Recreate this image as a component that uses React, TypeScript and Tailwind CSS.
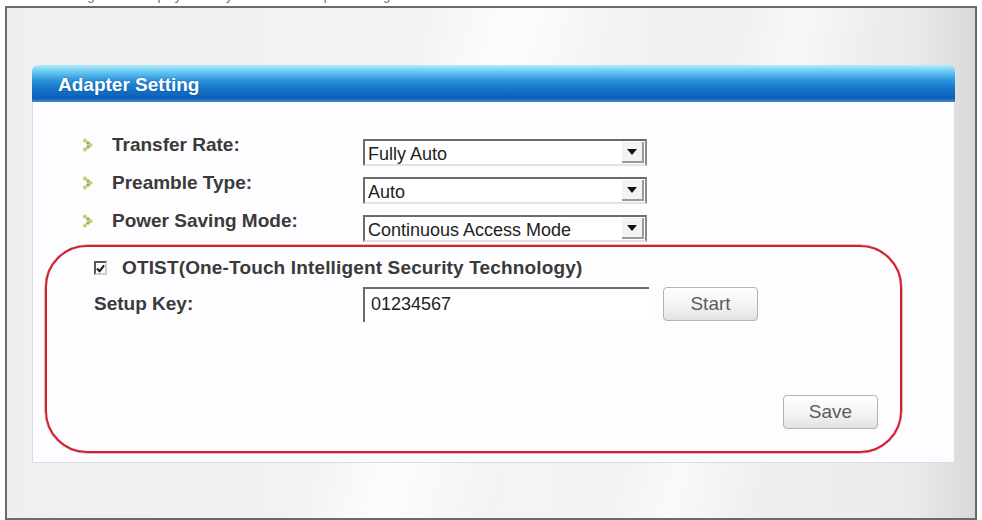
import React from "react";

// little dotted chevron used in front of each setting label
function Bullet() {
  return (
    <svg width="12" height="14" viewBox="0 0 12 14" className="shrink-0">
      <circle cx="3" cy="2.5" r="2" fill="#c9d257" />
      <circle cx="6" cy="5" r="1.8" fill="#a2a86c" />
      <circle cx="8.5" cy="7" r="2" fill="#c9d257" />
      <circle cx="6" cy="9" r="1.8" fill="#a2a86c" />
      <circle cx="3" cy="11.5" r="2" fill="#c9d257" />
    </svg>
  );
}

function Select({ value }: { value: string }) {
  return (
    <div className="flex h-[27px] w-[284px] items-stretch border-2 border-t-[#6b6b6b] border-l-[#6b6b6b] border-r-[#8a8a8a] border-b-[#e2e2e2] bg-white">
      <span className="flex flex-1 items-center pl-[3px] pt-[2px] text-[18px] leading-none text-[#222]">
        {value}
      </span>
      <span className="my-[1px] mr-[1px] flex w-[22px] items-center justify-center border-r-2 border-b-2 border-r-[#9a9a9a] border-b-[#9a9a9a] bg-[#f3f3f3]">
        <svg width="10" height="6" viewBox="0 0 10 6">
          <polygon points="0,0 10,0 5,6" fill="#111" />
        </svg>
      </span>
    </div>
  );
}

function Button({ label }: { label: string }) {
  return (
    <button className="flex h-[34px] w-[95px] items-center justify-center rounded-[4px] border border-[#b3b3b3] bg-[linear-gradient(180deg,#ffffff_0%,#f3f3f3_55%,#e2e2e2_100%)] text-[19px] text-[#5c5c5c] shadow-[inset_0_1px_0_#fff]">
      {label}
    </button>
  );
}

const rows = [
  { label: "Transfer Rate:", value: "Fully Auto" },
  { label: "Preamble Type:", value: "Auto" },
  { label: "Power Saving Mode:", value: "Continuous Access Mode" },
];

export default function App() {
  return (
    <div className="relative h-[520px] w-[982px] overflow-hidden bg-white font-['Liberation_Sans',Arial,sans-serif]">
      {/* caption line cut off above the window */}
      <div className="h-[6px] overflow-hidden pl-[18px]">
        <p className="-mt-[12px] text-[13px] leading-[16px] text-[#6a6a6a]">
          The following screen displays when you click the Adapter Setting tab.
        </p>
      </div>

      <div className="mx-[5px] h-[514px] border-2 border-[#6a6a6a] bg-[linear-gradient(105deg,transparent_38%,rgba(255,255,255,0.8)_46%,transparent_56%,transparent_66%,rgba(255,255,255,0.6)_72%,transparent_80%),linear-gradient(90deg,#efefef_0%,#f4f4f4_55%,#ebebeb_93%,#d9d9d9_100%)] pl-[25px] pt-[57px]">
        <section className="w-[923px]">
          <header className="flex h-[37px] items-center rounded-t-[6px] bg-[linear-gradient(180deg,#b4ecfc_0%,#6fcdf2_16%,#2b92dc_42%,#1470c8_68%,#0e5fb7_90%,#4a8cd0_100%)] pl-[26px] pt-[2px]">
            <h1 className="text-[19px] font-bold leading-none text-white [text-shadow:0_0_2px_rgba(0,40,100,0.4)]">
              Adapter Setting
            </h1>
          </header>

          <div className="h-[361px] border border-t-0 border-[#dcdae4] bg-[#fdfcfe] pt-[31px]">
            {rows.map((row) => (
              <div key={row.label} className="grid h-[38px] grid-cols-[330px_284px]">
                <div className="flex h-[22px] items-center gap-[18px] pl-[49px] pt-[2px]">
                  <Bullet />
                  <span className="text-[19px] font-bold text-[#3a3a3a]">{row.label}</span>
                </div>
                <div className="pt-[6px]">
                  <Select value={row.value} />
                </div>
              </div>
            ))}

            <div className="mt-[10px] flex h-[22px] items-center pl-[61px]">
              <span className="flex h-[14px] w-[13px] items-center justify-center border-2 border-t-[#555] border-l-[#555] border-r-[#cfcfcf] border-b-[#cfcfcf] bg-white">
                <svg width="10" height="9" viewBox="0 0 10 9">
                  <path d="M1 4.5 L4 7.5 L9 1" stroke="#1a1a1a" strokeWidth="2.2" fill="none" />
                </svg>
              </span>
              <span className="ml-[15px] text-[19px] font-bold tracking-[0.15px] text-[#3a3a3a]">
                OTIST(One-Touch Intelligent Security Technology)
              </span>
            </div>

            <div className="mt-[8px] grid grid-cols-[330px_auto]">
              <div className="flex h-[34px] items-center pl-[61px]">
                <span className="text-[19px] font-bold text-[#3a3a3a]">Setup Key:</span>
              </div>
              <div className="flex items-start gap-[14px]">
                <div className="flex h-[35px] w-[286px] items-center border-t-2 border-l-2 border-t-[#6b6b6b] border-l-[#6b6b6b] bg-white pl-[6px] pb-[2px] text-[18px] text-[#222]">
                  01234567
                </div>
                <Button label="Start" />
              </div>
            </div>

            <div className="mt-[73px] flex justify-end pr-[76px]">
              <Button label="Save" />
            </div>
          </div>
        </section>
      </div>

      {/* red highlight ring drawn over the OTIST section */}
      <div className="pointer-events-none absolute left-[45px] top-[245px] h-[208px] w-[857px] rounded-[42px] border-2 border-[#d41f2f] shadow-[0_0_0_0.5px_rgba(120,0,10,0.5)]" />
    </div>
  );
}
